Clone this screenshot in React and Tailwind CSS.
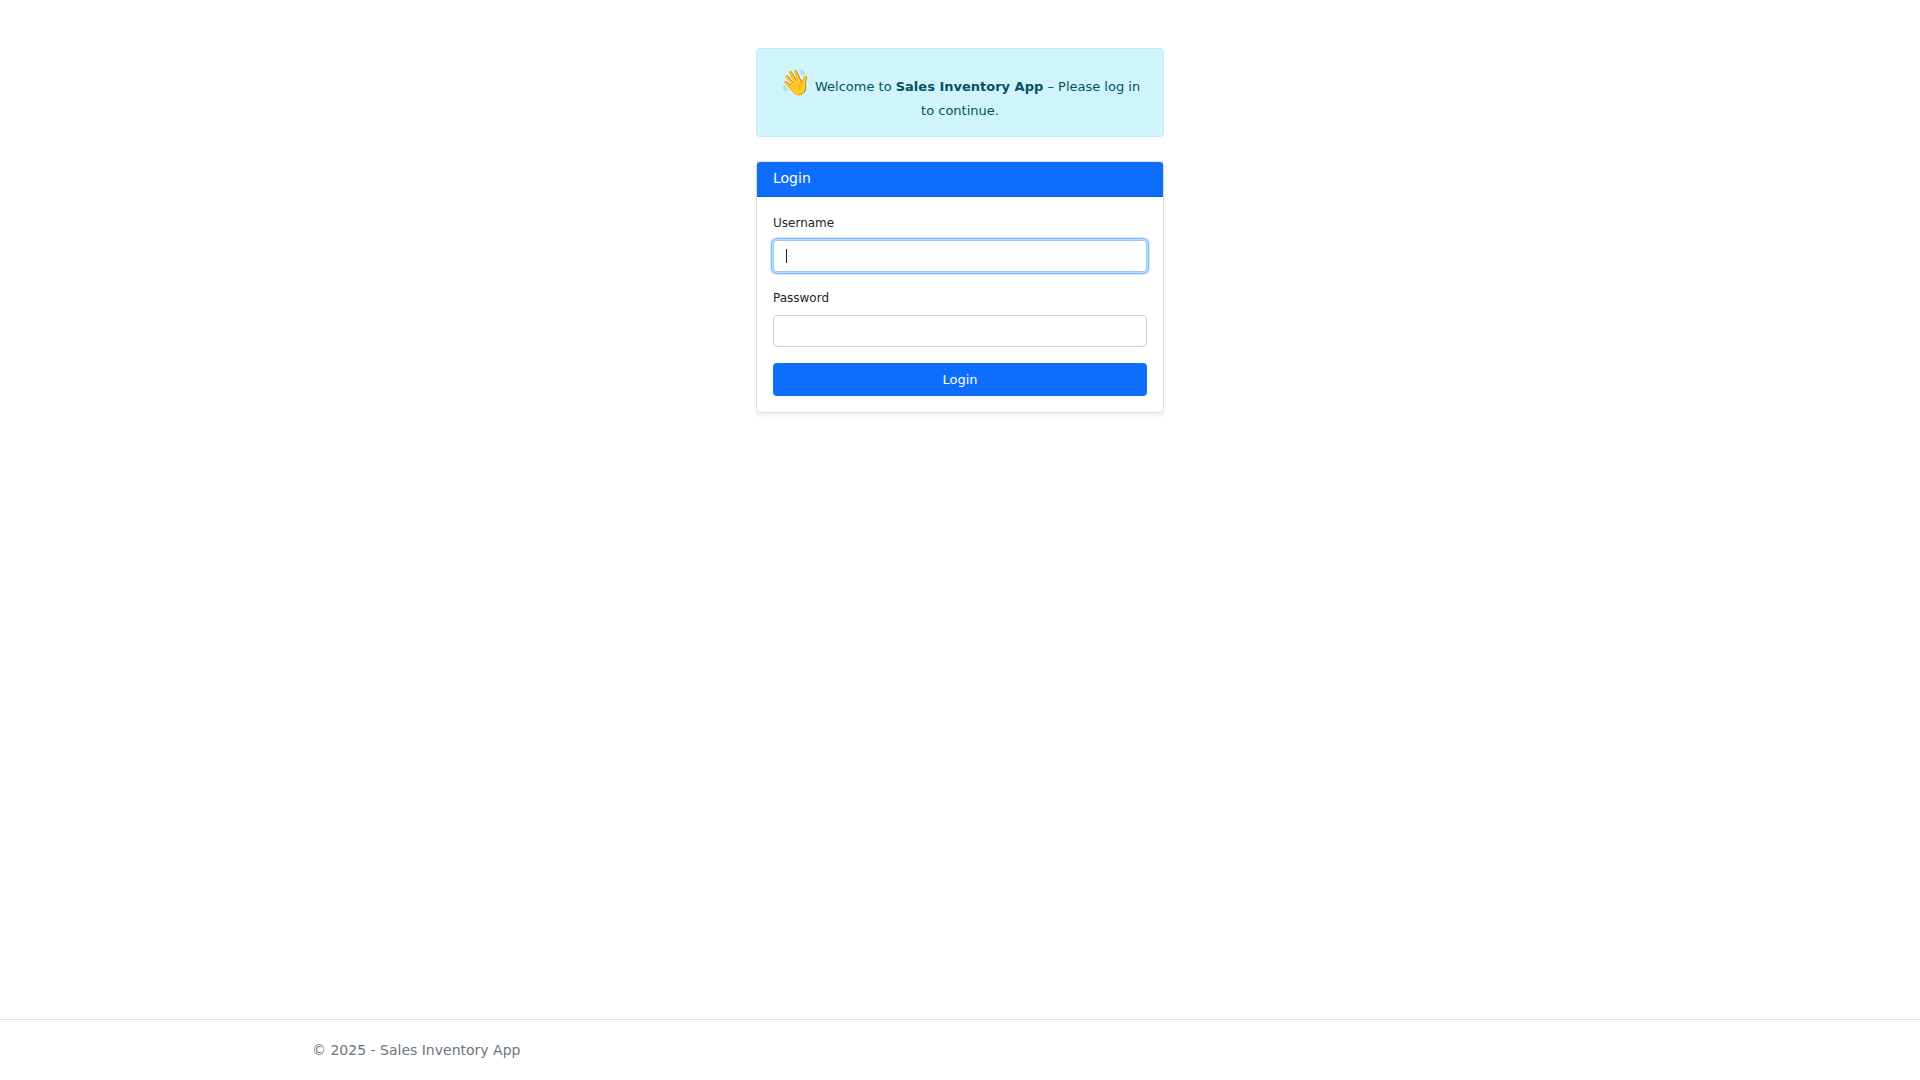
import { useState } from "react";

function Field({ id, label, type = "text", autoFocus = false }) {
  const [value, setValue] = useState("");
  const [focused, setFocused] = useState(autoFocus);
  const showCaret = focused && value === "";
  return (
    <div className="mb-4">
      <label htmlFor={id} className="mb-1.5 block text-[12px] leading-[21px]">
        {label}
      </label>
      <div className="relative">
        <input
          id={id}
          type={type}
          value={value}
          autoFocus={autoFocus}
          onFocus={() => setFocused(true)}
          onBlur={() => setFocused(false)}
          onChange={(e) => setValue(e.target.value)}
          className={
            "block h-8 w-full rounded border border-[#ced4da] bg-white px-3 text-[13px] text-[#212529] outline-none focus:border-[#9cc8f6] focus:shadow-[0_0_0_1px_#c2dcfe,0_0_0_2px_#80bbfd,0_0_0_3px_#d3e7fe] " +
            (showCaret ? "caret-transparent" : "caret-[#212529]")
          }
        />
        {showCaret && (
          <span aria-hidden="true" className="pointer-events-none absolute inset-y-0 left-[13px] flex items-center">
            <span className="h-3.5 w-px bg-[#212529]" />
          </span>
        )}
      </div>
    </div>
  );
}

export default function App() {
  return (
    <div className="flex min-h-screen flex-col bg-white font-['DejaVu_Sans',sans-serif] text-[#212529]">
      <main className="mx-auto flex w-full max-w-[408px] grow flex-col pt-12">
        <div
          role="alert"
          className="mb-6 rounded border border-[#b6effb] bg-[#cff4fc] p-4 text-center text-[13px] leading-[19px] text-[#055160]"
        >
          <span className="text-[25px] leading-9">👋</span> Welcome to{" "}
          <strong className="font-bold">Sales Inventory App</strong> – Please log in to continue.
        </div>
        <section className="rounded border border-black/[0.13] shadow-[0_2px_4px_rgba(0,0,0,0.075)]">
          <h1 className="rounded-t-[3px] border-b border-[#0b60dd] bg-[#0d6efd] px-4 pt-[7px] pb-[9px] text-[14px] leading-[18px] text-white">
            Login
          </h1>
          <form className="p-4" onSubmit={(e) => e.preventDefault()}>
            <Field id="username" label="Username" autoFocus />
            <Field id="password" label="Password" type="password" />
            <button type="submit" className="block h-[33px] w-full rounded bg-[#0d6efd] text-[13px] text-white">
              Login
            </button>
          </form>
        </section>
      </main>
      <footer className="border-t border-[#dee2e6] text-[14px] leading-[60px] text-[#6c757d]">
        <div className="mx-auto max-w-[1320px] px-3">© 2025 - Sales Inventory App</div>
      </footer>
    </div>
  );
}
